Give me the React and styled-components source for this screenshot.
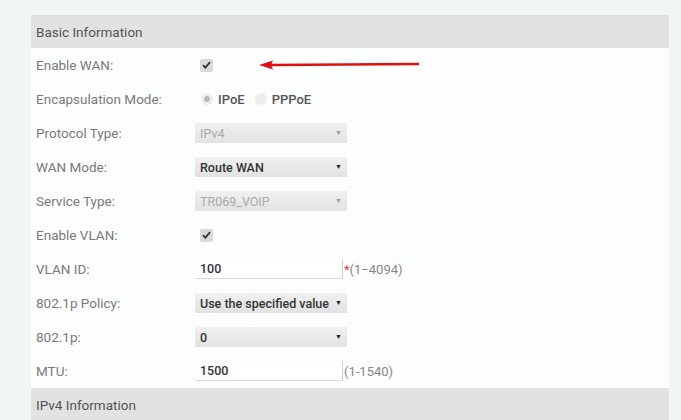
import React from "react"
import styled, { createGlobalStyle } from "styled-components"

const GlobalStyle = createGlobalStyle`
  html, body {
    margin: 0;
    padding: 0;
    background: #f1f6f5;
    font-family: Roboto, "Noto Sans", "Liberation Sans", sans-serif;
  }
`

const rows = [
  { label: "Enable WAN:", type: "check", arrow: true },
  { label: "Encapsulation Mode:", type: "radio" },
  { label: "Protocol Type:", type: "select", value: "IPv4", disabled: true },
  { label: "WAN Mode:", type: "select", value: "Route WAN" },
  { label: "Service Type:", type: "select", value: "TR069_VOIP", disabled: true },
  { label: "Enable VLAN:", type: "check" },
  { label: "VLAN ID:", type: "input", value: "100", hint: "(1−4094)", required: true },
  { label: "802.1p Policy:", type: "select", value: "Use the specified value" },
  { label: "802.1p:", type: "select", value: "0" },
  { label: "MTU:", type: "input", value: "1500", hint: "(1-1540)" },
]

const Control = ({ row }) => {
  if (row.type === "check") {
    return (
      <Inline>
        <CheckBox>
          <svg width="9" height="8" viewBox="0 0 9 8">
            <path d="M1 4.2 L3.4 6.6 L8 1.2" fill="none" stroke="#333" strokeWidth="1.8" />
          </svg>
        </CheckBox>
        {row.arrow && (
          <Arrow width="162" height="12" viewBox="0 0 162 12">
            <line x1="12" y1="6" x2="160" y2="5" stroke="#e01010" strokeWidth="2.4" />
            <path d="M0 6 L14 1.5 L12 6 L14 10.5 Z" fill="#e01010" />
          </Arrow>
        )}
      </Inline>
    )
  }
  if (row.type === "radio") {
    return (
      <Inline>
        <Radio $on />
        <RadioText>IPoE</RadioText>
        <Radio $gap />
        <RadioText>PPPoE</RadioText>
      </Inline>
    )
  }
  if (row.type === "select") {
    return (
      <Select $disabled={row.disabled}>
        <span>{row.value}</span>
        <Caret $disabled={row.disabled}>▼</Caret>
      </Select>
    )
  }
  return (
    <Inline>
      <Input>{row.value}</Input>
      <Hint>
        {row.required && <Star>*</Star>}
        {row.hint}
      </Hint>
    </Inline>
  )
}

const App = () => (
  <>
    <GlobalStyle />
    <Page>
      <Panel>
        <Header>Basic Information</Header>
        <Body>
          {rows.map((row) => (
            <Row key={row.label}>
              <Label>{row.label}</Label>
              <Control row={row} />
            </Row>
          ))}
        </Body>
        <Header>IPv4 Information</Header>
      </Panel>
    </Page>
  </>
)

const Page = styled.div`
  padding: 15px 12px 0 31px;
  height: 420px;
  box-sizing: border-box;
  overflow: hidden;
`

const Panel = styled.section`
  width: 638px;
  background: #fbfefd;
`

const Header = styled.div`
  height: 33px;
  display: flex;
  align-items: center;
  padding-left: 5px;
  background: #e0e3df;
  color: #555;
  font-size: 13.5px;
`

const Body = styled.div`
  padding: 0;
`

const Row = styled.div`
  height: 34px;
  display: grid;
  grid-template-columns: 159px 1fr;
  align-items: center;
  padding-left: 5px;
`

const Label = styled.div`
  color: #7a7a7a;
  font-size: 13.5px;
`

const Inline = styled.div`
  display: flex;
  align-items: center;
`

const CheckBox = styled.div`
  width: 13px;
  height: 13px;
  margin-left: 5px;
  border-radius: 2px;
  background: #d9d9d9;
  display: flex;
  align-items: center;
  justify-content: center;
`

const Arrow = styled.svg`
  margin-left: 46px;
`

const Radio = styled.div`
  width: 12px;
  height: 12px;
  border-radius: 50%;
  margin-left: ${(p) => (p.$gap ? "10px" : "6px")};
  background: ${(p) => (p.$on ? "radial-gradient(circle, #b9b9b9 0 2.5px, #eeeeee 3.5px)" : "#eeeeee")};
`

const RadioText = styled.span`
  margin-left: 5px;
  font-size: 13px;
  font-weight: 500;
  color: #555;
`

const Select = styled.div`
  width: 152px;
  height: 20px;
  box-sizing: border-box;
  display: flex;
  align-items: center;
  justify-content: space-between;
  padding: 0 5px 0 5px;
  background: linear-gradient(#f0f0f0, #e2e2e2);
  color: ${(p) => (p.$disabled ? "#aaaaaa" : "#333")};
  font-size: 12.5px;
  font-weight: ${(p) => (p.$disabled ? 400 : 500)};
  white-space: nowrap;
`

const Caret = styled.span`
  font-size: 7px;
  color: ${(p) => (p.$disabled ? "#999" : "#222")};
`

const Input = styled.div`
  width: 148px;
  height: 20px;
  box-sizing: border-box;
  display: flex;
  align-items: center;
  padding-left: 5px;
  background: #fff;
  border-right: 1px solid #cfcfcf;
  border-bottom: 1px solid #d9d9d9;
  color: #333;
  font-size: 12.5px;
  font-weight: 500;
`

const Hint = styled.span`
  margin-left: 1px;
  color: #888;
  font-size: 13px;
`

const Star = styled.span`
  color: #e04040;
`

export default App
